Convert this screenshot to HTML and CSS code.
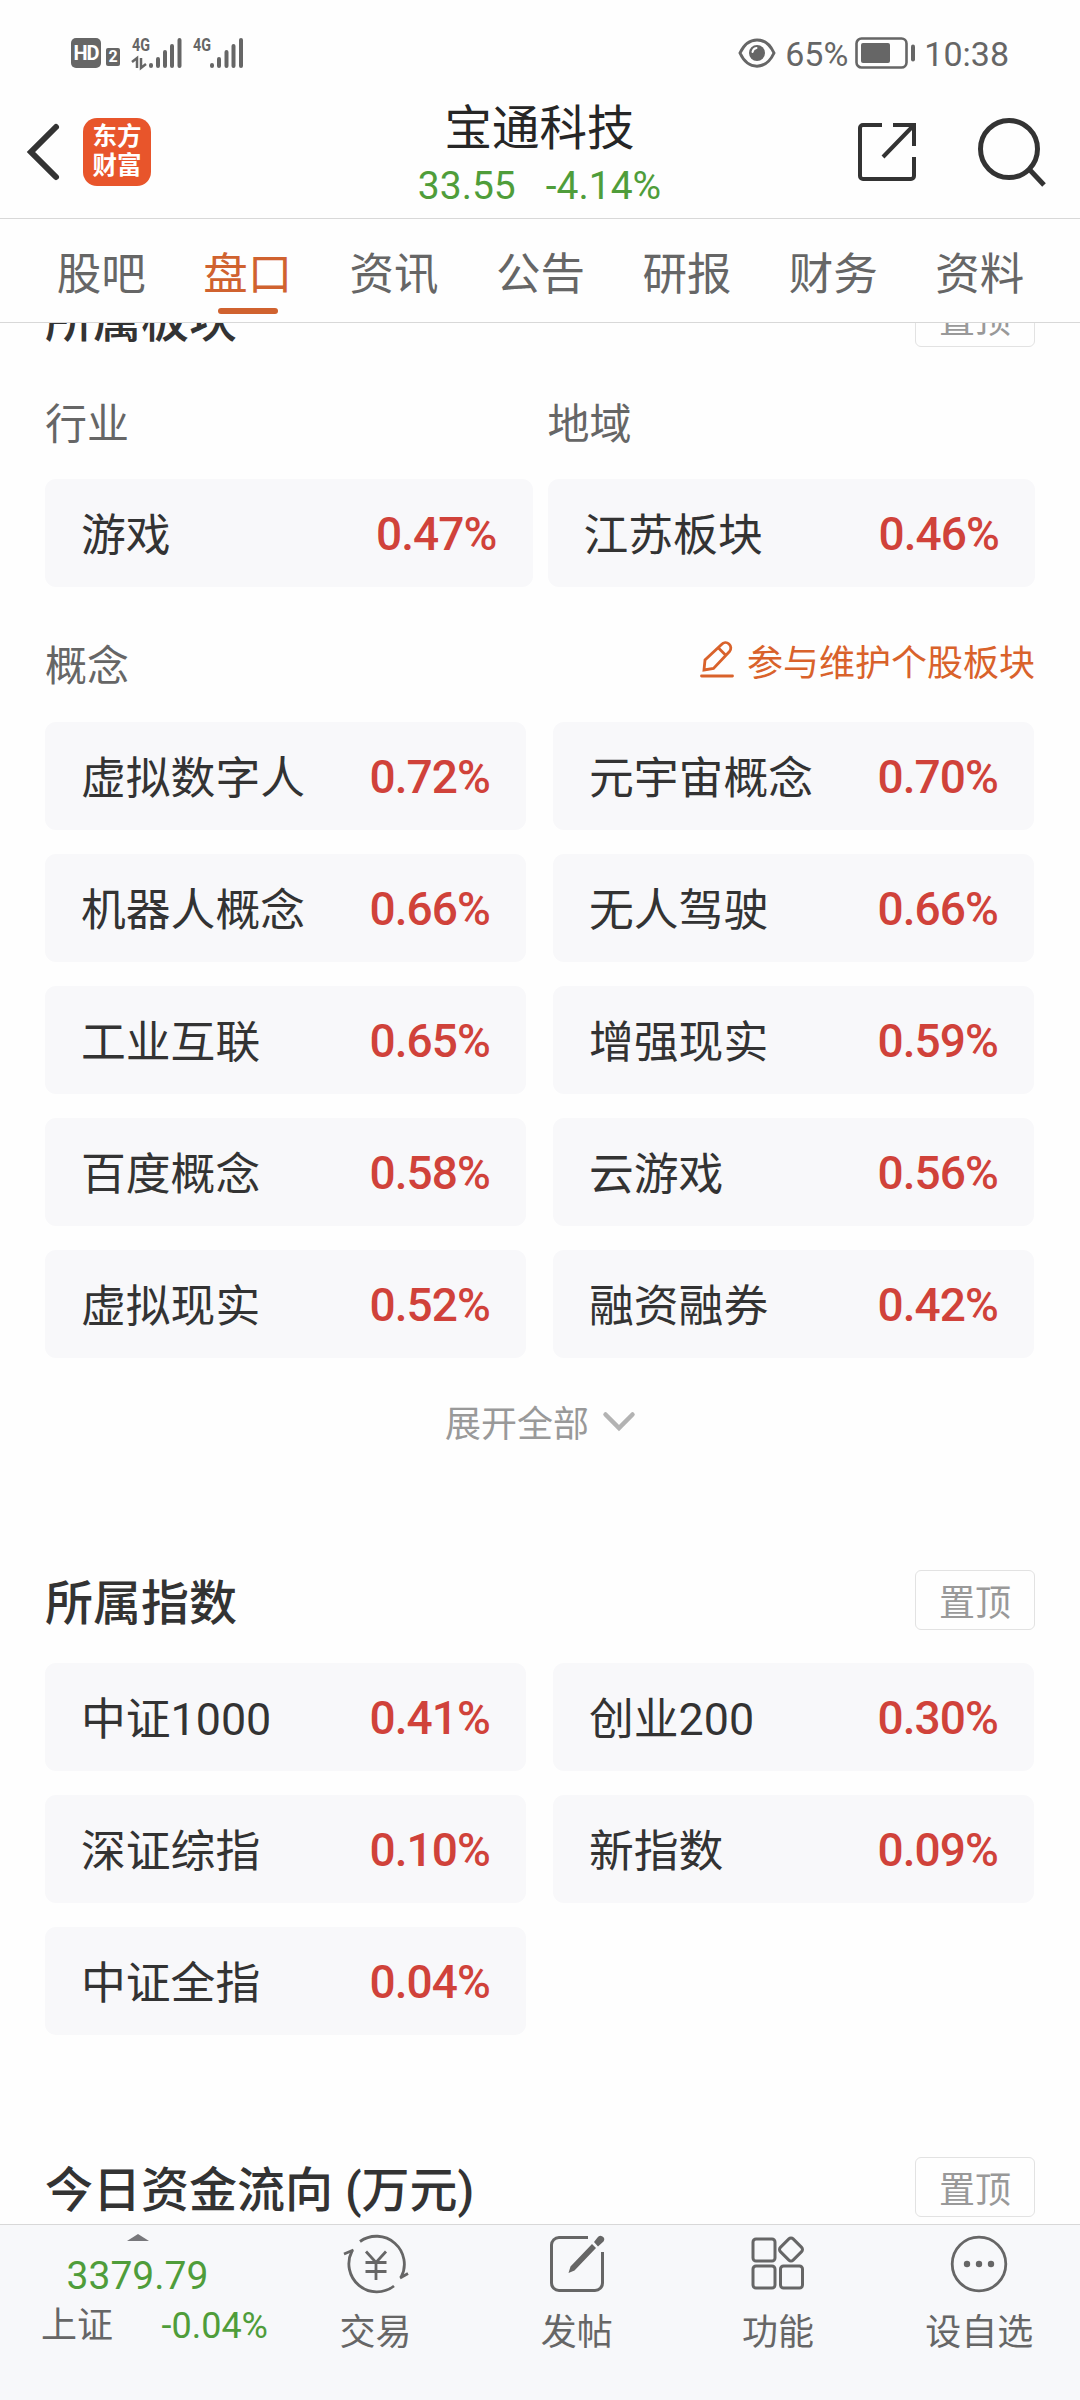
FILE: index.html
```html
<!DOCTYPE html>
<html lang="zh-CN">
<head>
    <meta charset="UTF-8">
    <meta name="viewport" content="width=device-width, initial-scale=1.0">
    <title>宝通科技</title>
    <link rel="stylesheet" href="styles.css">
</head>
<body>
    <div class="statusBar">
        <div class="statusLeft">
            <span class="hdBadge">HD</span>
            <span class="simBadge">2</span>
            <svg class="signal" width="50" height="32" viewBox="0 0 50 32">
                <text x="0" y="14" class="signalText" textLength="18" lengthAdjust="spacingAndGlyphs">4G</text>
                <path d="M0 25l5-4v10M9 21v10l5-4" fill="none" stroke="#666" stroke-width="2.5"/>
                <path d="M19 28v1M26 22v7M33 15v14M40 9v20M47.500 3v26" stroke="#666" stroke-width="4" stroke-linecap="round"/>
            </svg>
            <svg class="signal second" width="51" height="32" viewBox="0 0 51 32">
                <text x="0" y="14" class="signalText" textLength="18" lengthAdjust="spacingAndGlyphs">4G</text>
                <path d="M19 28v1M26 22v7M33.500 15v14M40.500 9v20M48 3v26" stroke="#666" stroke-width="4" stroke-linecap="round"/>
            </svg>
        </div>
        <div class="statusRight">
            <svg width="38" height="30" viewBox="0 0 38 30">
                <path d="M2 15C10-2.500 28-2.500 36 15C28 32.500 10 32.500 2 15z" fill="none" stroke="#666" stroke-width="3"/>
                <circle cx="19" cy="15" r="8" fill="#666"/>
                <path d="M14.500 14a5 5 0 0 1 4-4" fill="none" stroke="#fff" stroke-width="2" stroke-linecap="round"/>
            </svg>
            <span class="percent">65%</span>
            <svg class="battery" width="61" height="32" viewBox="0 0 61 32">
                <rect x="1.500" y="1.500" width="50" height="29" rx="5" fill="none" stroke="#666" stroke-width="2.600"/>
                <rect x="6" y="6" width="29" height="20" rx="2" fill="#666"/>
                <rect x="56" y="7.500" width="4" height="17" rx="2" fill="#666"/>
            </svg>
            <span class="time">10:38</span>
        </div>
    </div>

    <header class="header">
        <div class="headerLeft">
            <svg width="32" height="56" viewBox="0 0 32 56">
                <path d="M29 3L4 28l25 25" fill="none" stroke="#333" stroke-width="6" stroke-linecap="round"/>
            </svg>
            <div class="logo"><span>东方</span><span>财富</span></div>
        </div>
        <div class="stock">
            <h1>宝通科技</h1>
            <p><span>33.55</span><span>-4.14%</span></p>
        </div>
        <div class="headerRight">
            <svg width="58" height="58" viewBox="0 0 58 58" fill="none" stroke="#333" stroke-width="4">
                <path d="M24 2H5a3 3 0 0 0-3 3v48a3 3 0 0 0 3 3h48a3 3 0 0 0 3-3V34M35 2h21v21M56 2L25 34"/>
            </svg>
            <svg width="68" height="68" viewBox="0 0 68 68" fill="none" stroke="#333" stroke-width="5">
                <circle cx="31" cy="31" r="28.500"/>
                <path d="M51 51l15 16"/>
            </svg>
        </div>
    </header>

    <nav class="tabs">
        <span>股吧</span>
        <span class="active">盘口</span>
        <span>资讯</span>
        <span>公告</span>
        <span>研报</span>
        <span>财务</span>
        <span>资料</span>
    </nav>

    <main class="content">
        <section class="block">
            <div class="blockTitle">
                <h2>所属板块</h2>
                <button class="topBtn">置顶</button>
            </div>
            <div class="labels">
                <span>行业</span>
                <span>地域</span>
            </div>
            <div class="grid narrow">
                <div class="card"><span>游戏</span><b>0.47%</b></div>
                <div class="card"><span>江苏板块</span><b>0.46%</b></div>
            </div>
            <div class="concept">
                <span>概念</span>
                <a class="editLink">
                    <svg width="34" height="38" viewBox="0 0 34 38" fill="none" stroke="#d9622b" stroke-width="2.800">
                        <path d="M4 29l1-10L21.500 3.500a5.300 5.300 0 0 1 8 7L13.500 27.500zM18.500 7l7.500 7.500"/>
                        <path d="M1.500 35h31" stroke-linecap="round"/>
                    </svg>
                    参与维护个股板块
                </a>
            </div>
            <div class="grid">
                <div class="card"><span>虚拟数字人</span><b>0.72%</b></div>
                <div class="card"><span>元宇宙概念</span><b>0.70%</b></div>
                <div class="card"><span>机器人概念</span><b>0.66%</b></div>
                <div class="card"><span>无人驾驶</span><b>0.66%</b></div>
                <div class="card"><span>工业互联</span><b>0.65%</b></div>
                <div class="card"><span>增强现实</span><b>0.59%</b></div>
                <div class="card"><span>百度概念</span><b>0.58%</b></div>
                <div class="card"><span>云游戏</span><b>0.56%</b></div>
                <div class="card"><span>虚拟现实</span><b>0.52%</b></div>
                <div class="card"><span>融资融券</span><b>0.42%</b></div>
            </div>
            <div class="more">
                <span>展开全部</span>
                <svg width="32" height="20" viewBox="0 0 32 20">
                    <path d="M2.500 2.500L16 16L29.500 2.500" fill="none" stroke="#b3b3b3" stroke-width="4.500" stroke-linecap="round"/>
                </svg>
            </div>
        </section>

        <section class="block">
            <div class="blockTitle">
                <h2>所属指数</h2>
                <button class="topBtn">置顶</button>
            </div>
            <div class="grid">
                <div class="card"><span>中证1000</span><b>0.41%</b></div>
                <div class="card"><span>创业200</span><b>0.30%</b></div>
                <div class="card"><span>深证综指</span><b>0.10%</b></div>
                <div class="card"><span>新指数</span><b>0.09%</b></div>
                <div class="card"><span>中证全指</span><b>0.04%</b></div>
            </div>
        </section>

        <section class="block">
            <div class="blockTitle">
                <h2>今日资金流向 (万元)</h2>
                <button class="topBtn">置顶</button>
            </div>
        </section>
    </main>

    <footer class="bottomBar">
        <div class="index">
            <svg width="22" height="7" viewBox="0 0 22 7"><path d="M0 7L11 0l11 7z" fill="#77777b"/></svg>
            <div class="indexValue">3379.79</div>
            <div class="indexRow"><span>上证</span><em>-0.04%</em></div>
        </div>
        <div class="item">
            <svg width="66" height="60" viewBox="0 0 66 60" fill="none" stroke="#666" stroke-width="2.800">
                <path d="M17 7.500A28 28 0 0 1 58 43.500M51 52A28 28 0 0 1 9 17"/>
                <path d="M1 20l9.500-4M57 44l8-4.500"/>
                <path d="M23 17.500l10 11l10-11M33 28.500V46M22.500 28.500h21M22.500 37.500h21"/>
            </svg>
            <span>交易</span>
        </div>
        <div class="item">
            <svg width="56" height="60" viewBox="0 0 56 60" fill="none" stroke="#666" stroke-width="3">
                <path d="M39 3.500H10a7.500 7.500 0 0 0-7.500 7.500v38a7.500 7.500 0 0 0 7.500 7.500h36a7.500 7.500 0 0 0 7.500-7.500V18"/>
                <path d="M19.500 39l2-6.500L43 10l4 4L25.500 36.500zM45 8l3.500-4.500a3.500 3.500 0 0 1 6 4L49 12.500z" fill="#666" stroke="none"/>
            </svg>
            <span>发帖</span>
        </div>
        <div class="item">
            <svg width="54" height="60" viewBox="0 0 54 60" fill="none" stroke="#666" stroke-width="3">
                <rect x="2" y="5" width="22" height="22" rx="3"/>
                <rect x="2" y="32" width="22" height="22" rx="3"/>
                <rect x="29.500" y="32" width="22" height="22" rx="3"/>
                <rect x="31" y="6.500" width="18" height="18" rx="3" transform="rotate(45 40 15.500)"/>
            </svg>
            <span>功能</span>
        </div>
        <div class="item">
            <svg width="58" height="60" viewBox="0 0 58 60">
                <circle cx="29" cy="30" r="26.800" fill="none" stroke="#666" stroke-width="2.800"/>
                <circle cx="17" cy="30" r="3.200" fill="#666"/>
                <circle cx="29" cy="30" r="3.200" fill="#666"/>
                <circle cx="41" cy="30" r="3.200" fill="#666"/>
            </svg>
            <span>设自选</span>
        </div>
    </footer>
</body>
</html>
```
FILE: styles.css
```css
* {
    box-sizing: border-box;
}

body {
    margin: 0;
    width: 1080px;
    height: 2400px;
    display: flex;
    flex-direction: column;
    overflow: hidden;
    background-color: #fefefe;
    color: #333;
    font-family: Roboto, "Noto Sans CJK SC", sans-serif;
}

h1, h2, p {
    margin: 0;
}

svg {
    display: block;
    flex: none;
    overflow: visible;
}

/* status bar */
.statusBar {
    height: 92px;
    padding: 20px 71px 0 71px;
    display: flex;
    justify-content: space-between;
    color: #666;
}

.statusLeft, .statusRight {
    height: 66px;
    display: flex;
    align-items: center;
}

.hdBadge {
    width: 30px;
    height: 30px;
    border-radius: 5px;
    background-color: #666;
    color: white;
    font-size: 20px;
    font-weight: 700;
    line-height: 30px;
    text-align: center;
    letter-spacing: -1px;
}

.simBadge {
    width: 14px;
    height: 18px;
    margin: 8px 12px 0 5px;
    border-radius: 2px;
    background-color: #666;
    color: white;
    font-size: 16px;
    font-weight: 700;
    line-height: 18px;
    text-align: center;
}

.signal.second {
    margin-left: 11px;
}

.signalText {
    font-size: 19px;
    font-weight: 700;
    fill: #666;
}

.statusRight {
    font-size: 34px;
}

.percent {
    margin: 2px 7px 0 9px;
}

.time {
    margin: 2px 0 0 8px;
}

/* title bar */
.header {
    height: 127px;
    padding: 0 34px 0 27px;
    display: grid;
    grid-template-columns: 1fr auto 1fr;
    border-bottom: 1px solid #d8d8d8;
}

.headerLeft {
    height: 120px;
    display: flex;
    align-items: center;
    gap: 24px;
}

.logo {
    width: 68px;
    height: 68px;
    padding-bottom: 3px;
    border-radius: 14px;
    background-color: #e8552b;
    color: white;
    display: flex;
    flex-direction: column;
    align-items: center;
    justify-content: center;
    font-size: 24.5px;
    font-weight: 700;
    line-height: 29px;
}

.stock {
    padding-left: 6px;
    text-align: center;
}

.stock h1 {
    margin-top: 2px;
    font-size: 47.5px;
    font-weight: 400;
    line-height: 70px;
    color: #262626;
}

.stock p {
    display: flex;
    justify-content: center;
    gap: 30px;
    font-size: 39px;
    line-height: 44px;
    color: #4f9d3a;
}

.headerRight {
    height: 120px;
    display: flex;
    align-items: center;
    justify-content: flex-end;
    gap: 62px;
}

/* tabs */
.tabs {
    height: 104px;
    padding: 0 27px 0 28px;
    display: flex;
    border-bottom: 1px solid #d8d8d8;
}

.tabs span {
    flex: 1;
    display: flex;
    flex-direction: column;
    align-items: center;
    font-size: 44.5px;
    line-height: 60px;
    padding-top: 26px;
    color: #666;
}

.tabs .active {
    color: #d0622f;
}

.tabs .active::after {
    content: "";
    width: 60px;
    height: 6px;
    margin-top: 3px;
    border-radius: 3px;
    background-color: #d0622f;
}

/* content, scrolled a little under the tabs */
.content {
    flex: 1;
    padding: 0 45px;
    overflow: hidden;
}

.block:first-child {
    margin-top: -36px;
}

.block:nth-child(2) {
    margin-top: 118px;
}

.block:nth-child(3) {
    margin-top: 122px;
}

.blockTitle {
    height: 60px;
    margin-bottom: 33px;
    display: flex;
    align-items: center;
    justify-content: space-between;
}

.blockTitle h2 {
    font-size: 48px;
    font-weight: 500;
    line-height: 60px;
    padding-top: 7px;
}

.topBtn {
    width: 120px;
    height: 60px;
    padding: 0 0 1px;
    border: 1px solid #e2e2e2;
    border-radius: 6px;
    background: none;
    color: #999;
    font-family: inherit;
    font-size: 36px;
}

.labels {
    margin: 48px 0 24px;
    display: grid;
    grid-template-columns: 1fr 1fr;
    column-gap: 15px;
    font-size: 42px;
    line-height: 60px;
    color: #666;
}

.grid {
    padding-right: 1px;
    display: grid;
    grid-template-columns: 1fr 1fr;
    gap: 24px 27px;
}

.grid.narrow {
    padding-right: 0;
    column-gap: 15px;
}

.card {
    height: 108px;
    padding: 0 36px;
    display: flex;
    align-items: center;
    justify-content: space-between;
    border-radius: 11px;
    background-color: #f8f8fa;
    font-size: 44.8px;
}

.card span {
    padding-bottom: 4px;
}

/* digits are a bit taller and tighter than the names */
.card b {
    padding-top: 2px;
    font-size: 46px;
    font-weight: 500;
    letter-spacing: -0.9px;
    color: #d0423a;
}

.concept {
    height: 60px;
    margin: 45px 0 30px;
    display: flex;
    align-items: center;
    justify-content: space-between;
    font-size: 42px;
    color: #666;
}

.editLink {
    padding-bottom: 5px;
    display: flex;
    align-items: center;
    gap: 13px;
    font-size: 36px;
    color: #d9622b;
}

.more {
    height: 60px;
    margin-top: 34px;
    display: flex;
    align-items: center;
    justify-content: center;
    gap: 14px;
    font-size: 36px;
    color: #999;
}

.more span {
    padding-bottom: 3px;
}

/* bottom bar */
.bottomBar {
    height: 176px;
    display: flex;
    border-top: 1px solid #d8d8d8;
    background-color: #f7f8fa;
    color: #666;
}

.index {
    width: 275px;
    padding-top: 9px;
    display: flex;
    flex-direction: column;
    align-items: center;
}

.indexValue {
    margin-top: 13px;
    font-size: 39px;
    line-height: 44px;
    color: #4f9d3a;
}

.indexRow {
    width: 100%;
    padding: 2px 7px 0 41px;
    display: flex;
    justify-content: space-between;
    align-items: center;
    font-size: 36px;
    line-height: 52px;
}

.indexRow em {
    font-style: normal;
    color: #4f9d3a;
}

.item {
    flex: 1;
    padding-top: 9px;
    display: flex;
    flex-direction: column;
    align-items: center;
    font-size: 36px;
}

.item span {
    margin-top: 14px;
    line-height: 50px;
}
```
